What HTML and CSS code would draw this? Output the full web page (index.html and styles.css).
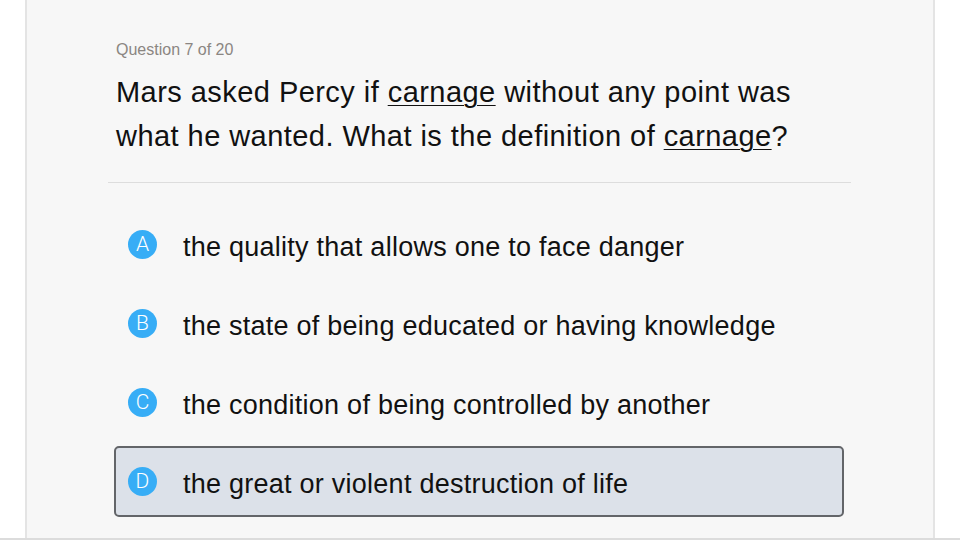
FILE: index.html
```html
<!DOCTYPE html>
<html>
  <head>
    <link rel="stylesheet" href="styles.css">
  </head>
  <body>
    <div class="page">
      <div class="panel">
        <div class="counter">Question 7 of 20</div>
        <div class="prompt">
          Mars asked Percy if <u>carnage</u> without any point was
          what he wanted. What is the definition of <u>carnage</u>?
        </div>
        <hr class="rule">
        <ul class="choices">
          <li class="choice"><span class="badge">A</span><span class="label">the quality that allows one to face danger</span></li>
          <li class="choice"><span class="badge">B</span><span class="label">the state of being educated or having knowledge</span></li>
          <li class="choice"><span class="badge">C</span><span class="label">the condition of being controlled by another</span></li>
          <li class="choice picked"><span class="badge">D</span><span class="label">the great or violent destruction of life</span></li>
        </ul>
      </div>
    </div>
  </body>
</html>
```
FILE: styles.css
```css
/* reset */
* { margin: 0; padding: 0; box-sizing: border-box; }

body {
  background: #ffffff;
  font-family: "Liberation Sans", Arial, sans-serif;
  color: #111111;
}

/* outer shell */
.page {
  width: 960px; height: 540px;
  overflow: hidden;
  border-bottom: 2px solid #dcdcdc;
}

.panel {
  margin-left: 25px;
  width: 910px;
  height: 538px;
  background: #f7f7f7;
  border-left: 2px solid #e4e4e4;
  border-right: 2px solid #e4e4e4;
  padding: 40px 0 0 89px;
}

/* question */
.counter { font-size: 16px; color: #8b8682; line-height: 20px; }
.prompt {
  margin-top: 10px;
  font-size: 29px;
  letter-spacing: 0.45px;
  line-height: 44px;
  width: 700px;
}
.prompt u { text-underline-offset: 3px; text-decoration-thickness: 1px; }

.rule {
  border: 0;
  border-top: 1px solid #dddddd;
  margin: 24px 0 0 -8px;
  width: 743px;
}

/* answers */
.choices { list-style: none; margin: 26px 0 0 -2px; display: flex; flex-direction: column; gap: 8px; }
.choice {
  display: flex;
  align-items: center;
  width: 730px;
  height: 71px;
  padding-left: 12px;
  border: 2px solid transparent;
  border-radius: 5px;
}
.choice.picked { background: #dce1e9; border-color: #636569; }

.badge {
  width: 29px; height: 29px;
  border-radius: 50%;
  background: #37adf6;
  color: #ffffff;
  font-family: Roboto, "Liberation Sans", sans-serif;
  font-weight: 300;
  font-size: 21px;
  line-height: 29px;
  text-align: center;
  flex-shrink: 0;
}
.label { margin-left: 26px; margin-top: 6px; font-size: 27px; letter-spacing: 0.25px; }
```
